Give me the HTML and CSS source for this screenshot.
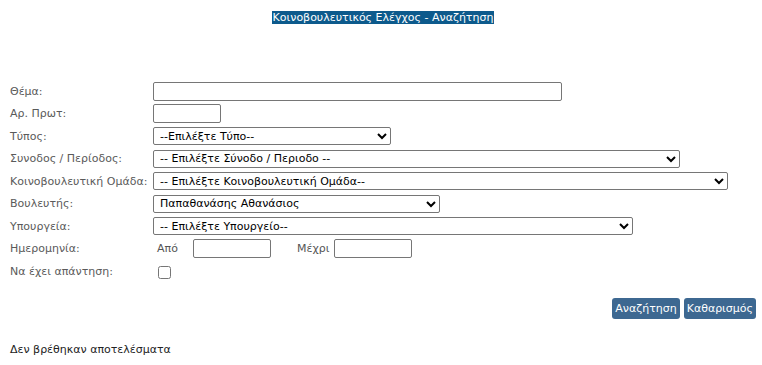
FILE: index.html
```html
<!DOCTYPE html>
<html lang="el">
  <head>
    <meta charset="UTF-8" />
    <title>Κοινοβουλευτικός Ελέγχος - Αναζήτηση</title>
    <link rel="stylesheet" href="styles.css">
  </head>
  <body>
    <div class="search-page">
      <h1 class="search-title"><span>Κοινοβουλευτικός Ελέγχος - Αναζήτηση</span></h1>

      <form class="search-form">
        <label class="search-label">Θέμα:</label>
        <div class="search-field"><input type="text" class="w-subject" /></div>

        <label class="search-label">Αρ. Πρωτ:</label>
        <div class="search-field"><input type="text" class="w-number" /></div>

        <label class="search-label">Τύπος:</label>
        <div class="search-field">
          <select class="w-type"><option>--Επιλέξτε Τύπο--</option></select>
        </div>

        <label class="search-label">Συνοδος / Περίοδος:</label>
        <div class="search-field">
          <select class="w-session"><option>-- Επιλέξτε Σύνοδο / Περιοδο --</option></select>
        </div>

        <label class="search-label">Κοινοβουλευτική Ομάδα:</label>
        <div class="search-field">
          <select class="w-party"><option>-- Επιλέξτε Κοινοβουλευτική Ομάδα--</option></select>
        </div>

        <label class="search-label">Βουλευτής:</label>
        <div class="search-field">
          <select class="w-mp"><option>Παπαθανάσης Αθανάσιος</option></select>
        </div>

        <label class="search-label">Υπουργεία:</label>
        <div class="search-field">
          <select class="w-ministry"><option>-- Επιλέξτε Υπουργείο--</option></select>
        </div>

        <label class="search-label">Ημερομηνία:</label>
        <div class="search-field date-range">
          <span class="date-from">Από</span>
          <input type="text" class="w-date" />
          <span class="date-to">Μέχρι</span>
          <input type="text" class="w-date" />
        </div>

        <label class="search-label">Να έχει απάντηση:</label>
        <div class="search-field"><input type="checkbox" class="answer-check" /></div>
      </form>

      <div class="search-actions">
        <button type="button">Αναζήτηση</button>
        <button type="button">Καθαρισμός</button>
      </div>

      <p class="search-results">Δεν βρέθηκαν αποτελέσματα</p>
    </div>
  </body>
</html>
```

FILE: styles.css
```css
body {
  margin: 0;
  background: #fff;
  font-family: "DejaVu Sans", Verdana, sans-serif;
  font-size: 11px;
  color: #555;
}

.search-page {
  padding: 0 6px 0 10px;
}

.search-title {
  margin: 0;
  padding-top: 10px;
  text-align: center;
  font-size: 11px;
  font-weight: normal;
  line-height: 16px;

  span {
    background: #0d5a8c;
    color: #fff;
    padding: 0 1px;
  }
}

/* Form grid */
.search-form {
  display: grid;
  grid-template-columns: 143px 1fr;
  grid-auto-rows: 22.5px;
  align-items: center;
  margin-top: 54px;
}

.search-label {
  color: #5a5a5a;
  white-space: nowrap;
}

.search-field {
  display: flex;
  align-items: center;

  input[type="text"] {
    box-sizing: border-box;
    height: 19px;
    border: 1px solid #767676;
    border-radius: 2px;
    padding: 0 3px;
    font: inherit;
  }

  select {
    box-sizing: border-box;
    height: 18px;
    border: 1px solid #767676;
    border-radius: 2px;
    background: #fff;
    color: #000;
    font-family: "DejaVu Sans", Verdana, sans-serif;
    font-size: 11px;
    padding: 0 2px;
  }
}

.w-subject { width: 409px; }
.w-number { width: 68px; }
.w-type { width: 238px; }
.w-session { width: 527px; }
.w-party { width: 575px; }
.w-mp { width: 287px; }
.w-ministry { width: 480px; }
.w-date { width: 78px; }

.date-range {
  .date-from {
    margin-left: 4px;
    width: 36px;
  }

  .date-to {
    margin-left: 26px;
    width: 37px;
  }
}

.answer-check {
  width: 13px;
  height: 13px;
  margin: 2px 0 0 5px;
}

/* Buttons */
.search-actions {
  display: flex;
  justify-content: flex-end;
  gap: 4px;
  margin-top: 15px;

  button {
    height: 21px;
    padding: 0 3px;
    border: none;
    border-radius: 3px;
    background: #3d6891;
    color: #fff;
    font-family: "DejaVu Sans", Verdana, sans-serif;
    font-size: 11px;
    cursor: pointer;
  }
}

.search-results {
  margin: 24px 0 0;
  color: #222;
}
```
